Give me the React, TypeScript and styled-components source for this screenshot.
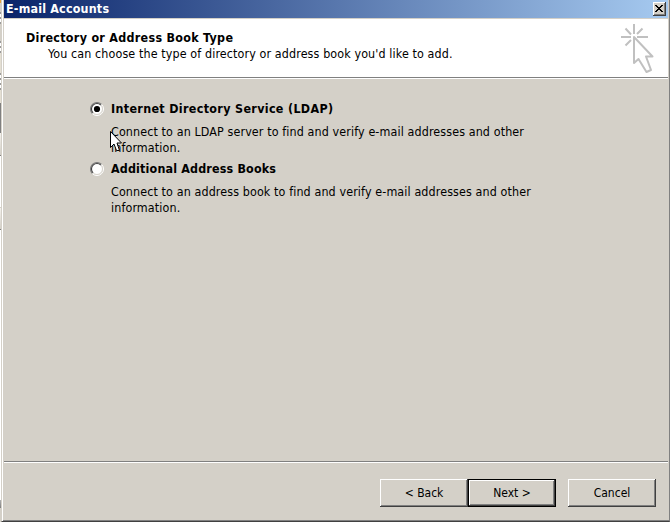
import React from "react";
import styled, { createGlobalStyle } from "styled-components";

const Global = createGlobalStyle`
  * { box-sizing: border-box; }
  body { margin: 0; background: #d4d0c8; overflow: hidden; }
`;

const Desktop = styled.div`
  display: grid;
  grid-template-columns: 1px 669px;
  width: 670px;
  height: 522px;
  font: 12px/16px "DejaVu Sans Condensed", "DejaVu Sans", sans-serif;
  font-stretch: condensed;
  color: #000;
`;

const Behind = styled.div`
  background: linear-gradient(
    #e8a33a 0 3px, #d4d0c8 3px 12px, #9a9a9a 12px 14px, #fff 14px 17px, #9a9a9a 17px 19px, #fff 19px 22px,
    #9a9a9a 22px 24px, #d4d0c8 24px 41px, #9a9a9a 41px 43px, #fff 43px 46px, #9a9a9a 46px 48px, #fff 48px 51px,
    #9a9a9a 51px 53px, #e4dfd3 53px 73px, #9a9a9a 73px 75px, #fff 75px 78px, #9a9a9a 78px 80px, #fff 80px 83px,
    #9a9a9a 83px 85px, #fff 85px 88px, #9a9a9a 88px 90px, #e4dfd3 90px 103px, #808080 103px 133px,
    #f4f2ed 133px, #d4d0c8 155px, #808080 155px 156px, #fff 156px 207px, #d4d0c8 207px 208px, #f4f2ed 208px,
    #d4d0c8 229px, #808080 229px 230px, #fff 230px 500px, #b0b0b0 500px, #808080 508px, #d4d0c8 508px
  );
`;

const Dialog = styled.main`
  display: flex;
  flex-direction: column;
  height: 522px;
  background: #d4d0c8;
  border-left: 1px solid #d4d0c8;
  border-right: 1px solid #808080;
  border-bottom: 1px solid #404040;
  box-shadow: inset 1px 0 #fff, inset 0 -1px #808080;
  padding: 0 1px 2px 2px;
`;

const TitleBar = styled.header`
  display: flex;
  align-items: flex-start;
  justify-content: space-between;
  height: 18px;
  padding: 1px 2px 0;
  background: linear-gradient(90deg, #0a246a, #a6caf0);
  color: #fff;
`;

const Bold = styled.span<{ $spacing: number }>`
  font-size: 12.4px;
  font-weight: bold;
  letter-spacing: ${(p) => p.$spacing}px;
  white-space: nowrap;
`;

const Text = styled.span<{ $spacing?: number }>`
  font-size: 12.4px;
  letter-spacing: ${(p) => p.$spacing ?? 0.12}px;
  font-variant-ligatures: none;
  white-space: nowrap;
`;

const CloseButton = styled.button`
  display: flex;
  align-items: center;
  justify-content: center;
  width: 13px;
  height: 14px;
  margin-top: 1px;
  padding: 0 1px 1px 0;
  border: 0;
  background: #d4d0c8;
  box-shadow: inset -1px -1px #404040, inset 1px 1px #fff, inset -2px -2px #808080;
`;

const Banner = styled.section`
  display: flex;
  justify-content: space-between;
  height: 59px;
  margin-top: 1px;
  padding: 5px 14px 0 22px;
  background: #fff;
  border-bottom: 1px solid #808080;
`;

const BannerText = styled.div`
  display: flex;
  flex-direction: column;
  padding-top: 6px;
`;

const Subtitle = styled.div`
  padding-left: 22px;
`;

const Body = styled.section`
  display: flex;
  flex-direction: column;
  flex: 1;
  border-top: 1px solid #fff;
  padding: 22px 0 0 86px;
`;

const Option = styled.label`
  display: grid;
  grid-template-columns: 21px 1fr;
  height: 60px;
`;

const RadioMark = styled.svg`
  margin-top: 1px;
`;

const Description = styled.div`
  display: flex;
  flex-direction: column;
  padding-top: 7px;
`;

const Footer = styled.footer`
  display: flex;
  justify-content: flex-end;
  height: 58px;
  padding: 17px 12px 0 0;
  border-top: 1px solid #808080;
  box-shadow: inset 0 1px #fff;
`;

const Button = styled.button<{ $primary?: boolean; $gap?: number }>`
  width: 88px;
  height: 28px;
  margin-left: ${(p) => p.$gap ?? 0}px;
  padding: 0;
  font: inherit;
  color: #000;
  background: #d4d0c8;
  border: ${(p) => (p.$primary ? "1px solid #000" : "0")};
  box-shadow: inset -1px -1px #404040, inset 1px 1px #fff, inset -2px -2px #808080;
`;

const Pointer = styled.svg`
  position: absolute;
  left: 110px;
  top: 131px;
`;

const Radio = ({ checked }: { checked?: boolean }) => (
  <RadioMark width="14" height="14" viewBox="0 0 14 14">
    <circle cx="7" cy="7" r="6" fill="#fff" />
    <path d="M2.4 11.6A6.5 6.5 0 0 1 11.6 2.4" fill="none" stroke="#808080" strokeWidth="1.1" />
    <path d="M3.1 10.9A5.5 5.5 0 0 1 10.9 3.1" fill="none" stroke="#404040" strokeWidth="1.1" />
    <path d="M11.6 2.4A6.5 6.5 0 0 1 2.4 11.6" fill="none" stroke="#fff" />
    <path d="M10.9 3.1A5.5 5.5 0 0 1 3.1 10.9" fill="none" stroke="#d4d0c8" />
    {checked && <circle cx="7" cy="7" r="3.1" />}
  </RadioMark>
);

const ClickIcon = () => (
  <svg width="34" height="52" viewBox="0 0 34 52" fill="none" stroke="#c0c0c0" strokeWidth="2">
    <path d="M14 0V10M1 13H11M17 13H28M5.5 4.5L11 10.5M22.5 4.5L17 10M5.5 21.5L11 16" />
    <path d="M14 13V39L18.5 35L26.5 48L31 46L26 32.5H32.5Z" strokeLinejoin="round" />
  </svg>
);

export default function App() {
  return (
    <>
      <Global />
      <Desktop>
        <Behind />
        <Dialog>
          <TitleBar>
            <Bold $spacing={0.2}>E-mail Accounts</Bold>
            <CloseButton aria-label="Close">
              <svg width="8" height="7" viewBox="0 0 8 7" shapeRendering="crispEdges">
                <path d="M0 0h2v1h1v1h2V1h1V0h2v1H7v1H6v1H5v1h1v1h1v1h1v1H6V6H5V5H3v1H2v1H0V6h1V5h1V4h1V3H2V2H1V1H0z" />
              </svg>
            </CloseButton>
          </TitleBar>
          <Banner>
            <BannerText>
              <Bold $spacing={0.3}>Directory or Address Book Type</Bold>
              <Subtitle>
                <Text>You can choose the type of directory or address book you'd like to add.</Text>
              </Subtitle>
            </BannerText>
            <ClickIcon />
          </Banner>
          <Body>
            <Option>
              <Radio checked />
              <div>
                <Bold $spacing={0.34}>Internet Directory Service (LDAP)</Bold>
                <Description>
                  <Text>Connect to an LDAP server to find and verify e-mail addresses and other</Text>
                  <Text>information.</Text>
                </Description>
              </div>
            </Option>
            <Option>
              <Radio />
              <div>
                <Bold $spacing={0.17}>Additional Address Books</Bold>
                <Description>
                  <Text>Connect to an address book to find and verify e-mail addresses and other</Text>
                  <Text>information.</Text>
                </Description>
              </div>
            </Option>
          </Body>
          <Footer>
            <Button>&lt; Back</Button>
            <Button $primary>Next &gt;</Button>
            <Button $gap={12}>Cancel</Button>
          </Footer>
        </Dialog>
      </Desktop>
      <Pointer width="13" height="21" viewBox="0 0 13 21" fill="#fff" stroke="#000">
        <path d="M.5 .5V16.5L4 13L6.5 19.5H9.5L7 12H11.5Z" />
      </Pointer>
    </>
  );
}
